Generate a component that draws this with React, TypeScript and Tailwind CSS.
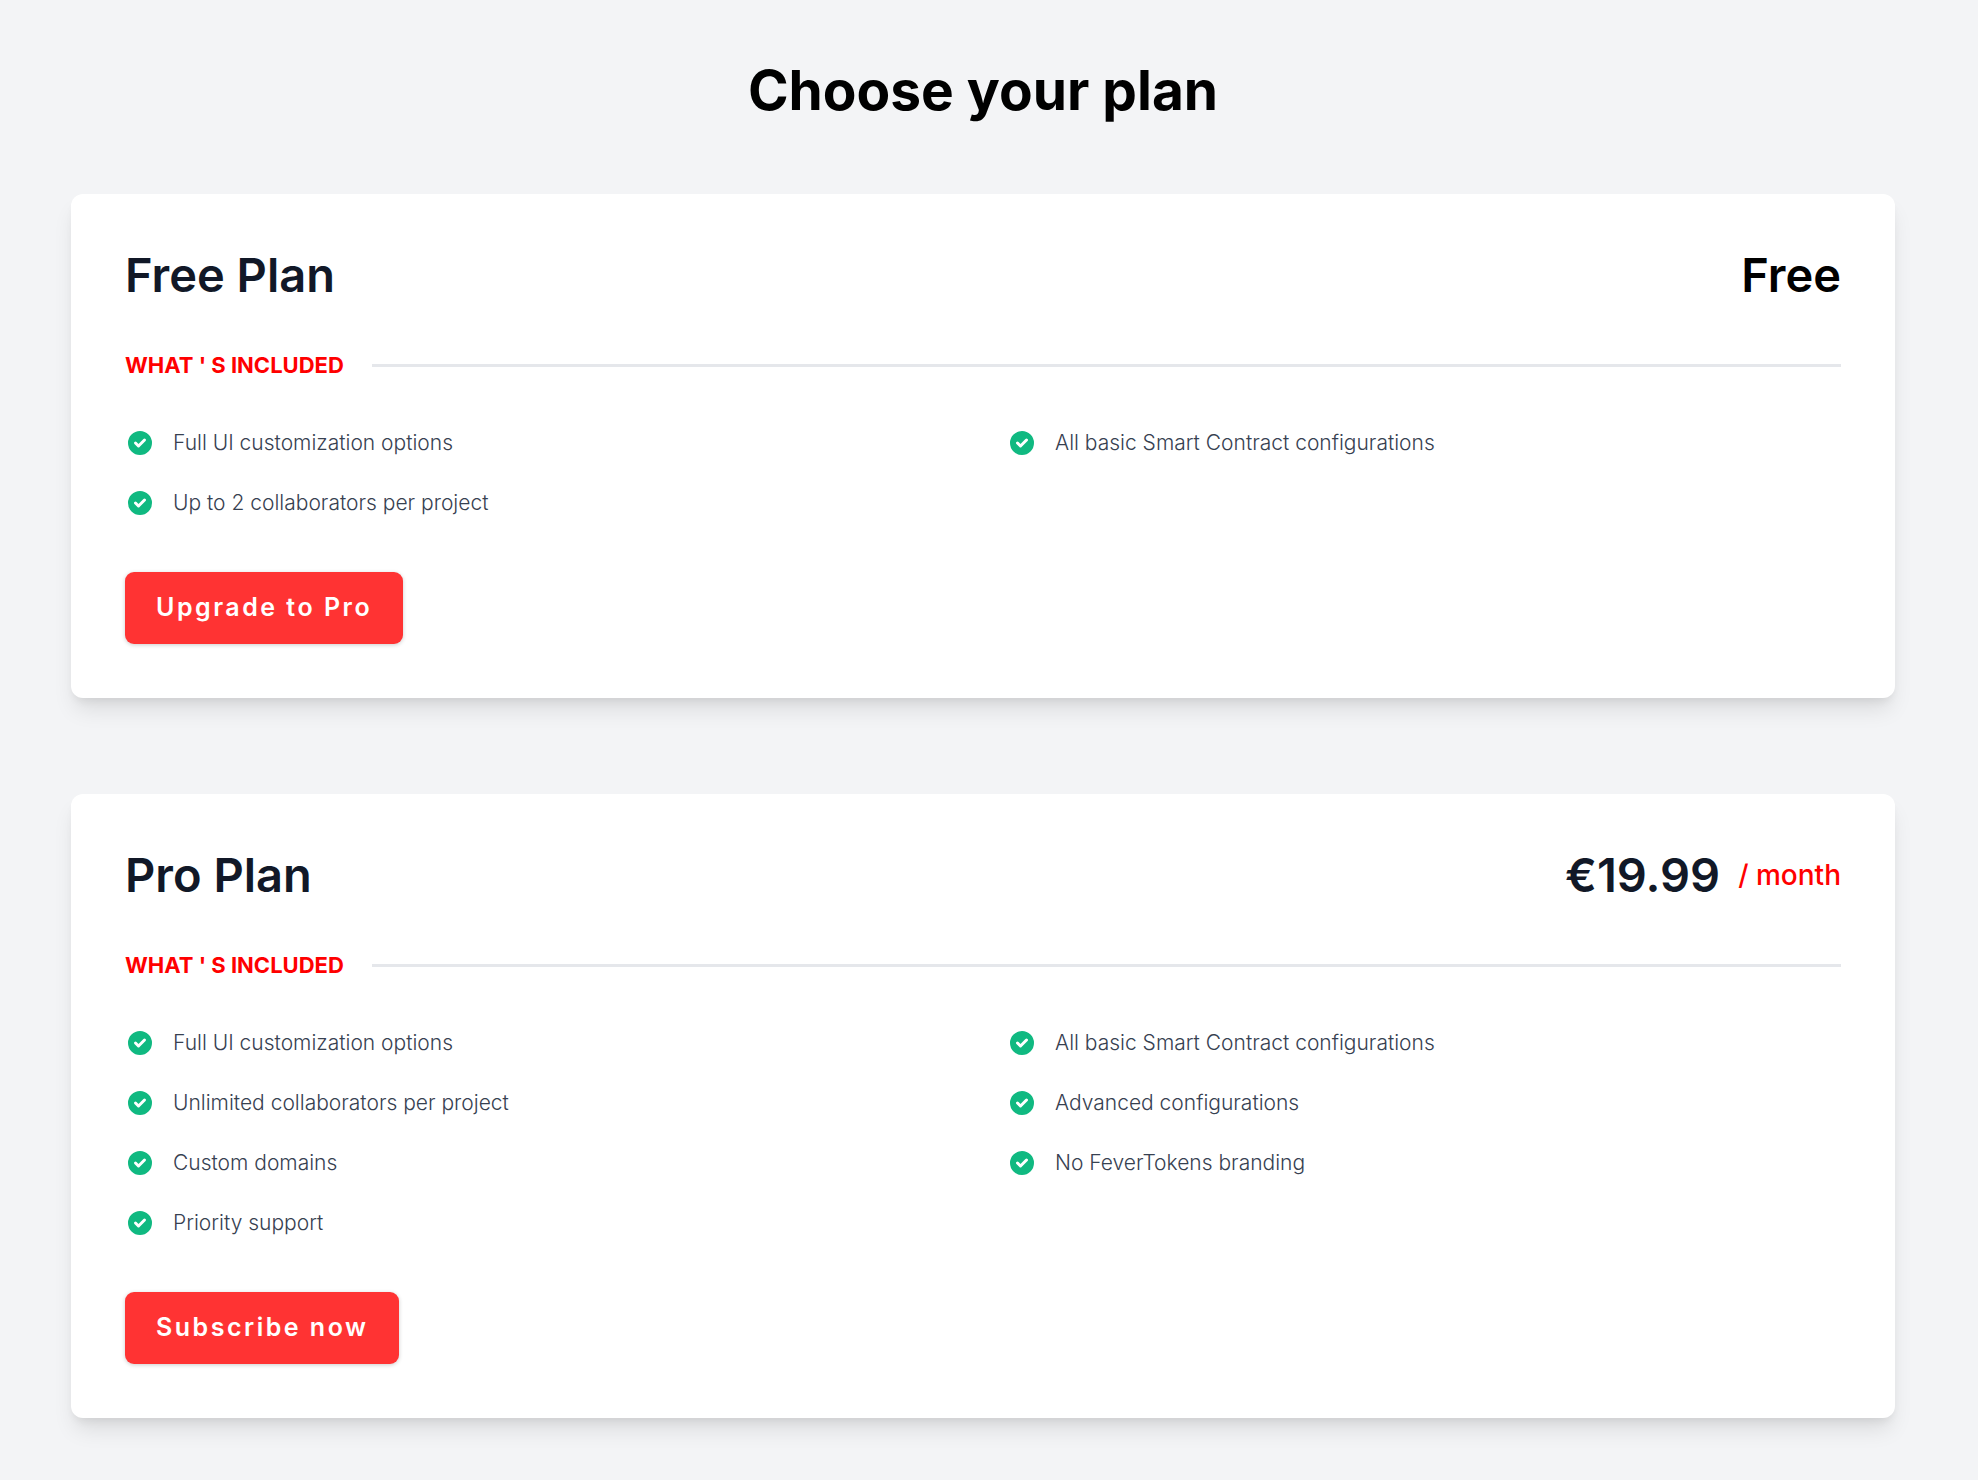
type Plan = {
  id: string;
  name: string;
  price: string;
  priceColor: string;
  period?: string;
  features: string[];
  action: string;
};

const plans: Plan[] = [
  {
    id: 'free',
    name: 'Free Plan',
    price: 'Free',
    priceColor: 'text-black',
    features: [
      'Full UI customization options',
      'All basic Smart Contract configurations',
      'Up to 2 collaborators per project',
    ],
    action: 'Upgrade to Pro',
  },
  {
    id: 'pro',
    name: 'Pro Plan',
    price: '€19.99',
    priceColor: 'text-[#111827]',
    period: '/ month',
    features: [
      'Full UI customization options',
      'All basic Smart Contract configurations',
      'Unlimited collaborators per project',
      'Advanced configurations',
      'Custom domains',
      'No FeverTokens branding',
      'Priority support',
    ],
    action: 'Subscribe now',
  },
];

function CheckIcon() {
  return (
    <svg className="size-[30px] shrink-0 text-[#10b981]" viewBox="0 0 20 20" fill="currentColor" aria-hidden="true">
      <path
        fillRule="evenodd"
        clipRule="evenodd"
        d="M10 18a8 8 0 100-16 8 8 0 000 16zm3.707-9.293a1 1 0 00-1.414-1.414L9 10.586 7.707 9.293a1 1 0 00-1.414 1.414l2 2a1 1 0 001.414 0l4-4z"
      />
    </svg>
  );
}

function PlanCard({ plan }: { plan: Plan }) {
  return (
    <section
      aria-labelledby={plan.id}
      className="rounded-xl bg-white p-[54px] shadow-[0_15px_22px_-4px_rgba(0,0,0,0.1),0_6px_9px_-3px_rgba(0,0,0,0.07)]"
    >
      <div className="flex items-center justify-between">
        <h2 id={plan.id} className="text-[47px] leading-[54px] font-semibold text-[#111827]">
          {plan.name}
        </h2>
        <p className="flex items-center gap-[18px]">
          <span className={`text-[47px] leading-[54px] font-semibold ${plan.priceColor}`}>{plan.price}</span>
          {plan.period && <span className="text-[28px] leading-[36px] font-medium text-[#ff0000]">{plan.period}</span>}
        </p>
      </div>

      <div className="mt-12 flex items-center gap-7">
        <h3 className="text-[22px] leading-[30px] font-bold text-[#ff0000]">WHAT &#39; S INCLUDED</h3>
        <div className="h-[3px] flex-1 bg-[#e5e7eb]" />
      </div>

      <ul className="mt-12 grid grid-cols-2 gap-x-12 gap-y-[30px]">
        {plan.features.map((feature) => (
          <li key={feature} className="flex items-center gap-[18px]">
            <CheckIcon />
            <span className="text-[21px] leading-[30px] font-light text-[#374151]">{feature}</span>
          </li>
        ))}
      </ul>

      <button
        type="button"
        className="mt-[54px] h-[72px] rounded-[9px] bg-[#ff3333] px-[31px] text-[25px] font-semibold tracking-widest text-white shadow-[0_1px_4px_rgba(0,0,0,0.2)]"
      >
        {plan.action}
      </button>
    </section>
  );
}

export default function App() {
  return (
    <main className="min-h-screen bg-[#f3f4f6] pt-[60px] pr-[83px] pb-[62px] pl-[71px] font-['Inter',sans-serif]">
      <h1 className="text-center text-[55px] leading-[60px] font-bold text-black">Choose your plan</h1>
      <div className="mt-[74px] flex flex-col gap-24">
        {plans.map((plan) => (
          <PlanCard key={plan.id} plan={plan} />
        ))}
      </div>
    </main>
  );
}
